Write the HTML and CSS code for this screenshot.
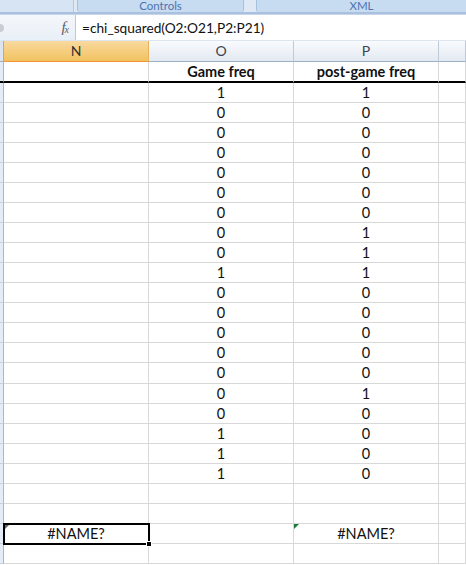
FILE: index.html
```html
<!DOCTYPE html>
<html>
<head>
<meta charset="utf-8">
<link rel="stylesheet" href="styles.css">
</head>
<body>
<div class="ribbon">
  <div class="grp grp-left"></div>
  <div class="grp grp-controls"><span>Controls</span></div>
  <div class="grp grp-xml"><span>XML</span></div>
</div>
<div class="fbar">
  <div class="namebox"><span class="nb-btn"></span><span class="fx">f<sub>x</sub></span></div>
  <div class="formula">=chi_squared(O2:O21,P2:P21)</div>
</div>
<div class="sheet">
  <div class="row colhead">
    <div class="c rh"></div>
    <div class="c ch sel">N</div>
    <div class="c ch">O</div>
    <div class="c ch">P</div>
    <div class="c ch"></div>
  </div>
  <div class="row hdr">
    <div class="c rh"></div>
    <div class="c"></div>
    <div class="c b">Game freq</div>
    <div class="c b">post-game freq</div>
    <div class="c"></div>
  </div>
  <div class="row"><div class="c rh"></div><div class="c"></div><div class="c">1</div><div class="c">1</div><div class="c"></div></div>
  <div class="row"><div class="c rh"></div><div class="c"></div><div class="c">0</div><div class="c">0</div><div class="c"></div></div>
  <div class="row"><div class="c rh"></div><div class="c"></div><div class="c">0</div><div class="c">0</div><div class="c"></div></div>
  <div class="row"><div class="c rh"></div><div class="c"></div><div class="c">0</div><div class="c">0</div><div class="c"></div></div>
  <div class="row"><div class="c rh"></div><div class="c"></div><div class="c">0</div><div class="c">0</div><div class="c"></div></div>
  <div class="row"><div class="c rh"></div><div class="c"></div><div class="c">0</div><div class="c">0</div><div class="c"></div></div>
  <div class="row"><div class="c rh"></div><div class="c"></div><div class="c">0</div><div class="c">0</div><div class="c"></div></div>
  <div class="row"><div class="c rh"></div><div class="c"></div><div class="c">0</div><div class="c">1</div><div class="c"></div></div>
  <div class="row"><div class="c rh"></div><div class="c"></div><div class="c">0</div><div class="c">1</div><div class="c"></div></div>
  <div class="row"><div class="c rh"></div><div class="c"></div><div class="c">1</div><div class="c">1</div><div class="c"></div></div>
  <div class="row"><div class="c rh"></div><div class="c"></div><div class="c">0</div><div class="c">0</div><div class="c"></div></div>
  <div class="row"><div class="c rh"></div><div class="c"></div><div class="c">0</div><div class="c">0</div><div class="c"></div></div>
  <div class="row"><div class="c rh"></div><div class="c"></div><div class="c">0</div><div class="c">0</div><div class="c"></div></div>
  <div class="row"><div class="c rh"></div><div class="c"></div><div class="c">0</div><div class="c">0</div><div class="c"></div></div>
  <div class="row tall"><div class="c rh"></div><div class="c"></div><div class="c">0</div><div class="c">0</div><div class="c"></div></div>
  <div class="row"><div class="c rh"></div><div class="c"></div><div class="c">0</div><div class="c">1</div><div class="c"></div></div>
  <div class="row"><div class="c rh"></div><div class="c"></div><div class="c">0</div><div class="c">0</div><div class="c"></div></div>
  <div class="row"><div class="c rh"></div><div class="c"></div><div class="c">1</div><div class="c">0</div><div class="c"></div></div>
  <div class="row"><div class="c rh"></div><div class="c"></div><div class="c">1</div><div class="c">0</div><div class="c"></div></div>
  <div class="row"><div class="c rh"></div><div class="c"></div><div class="c">1</div><div class="c">0</div><div class="c"></div></div>
  <div class="row"><div class="c rh"></div><div class="c"></div><div class="c"></div><div class="c"></div><div class="c"></div></div>
  <div class="row"><div class="c rh"></div><div class="c"></div><div class="c"></div><div class="c"></div><div class="c"></div></div>
  <div class="row"><div class="c rh"></div><div class="c active">#NAME?<span class="handle"></span></div><div class="c"></div><div class="c err">#NAME?</div><div class="c"></div></div>
  <div class="row"><div class="c rh"></div><div class="c"></div><div class="c"></div><div class="c"></div><div class="c"></div></div>
</div>
</body>
</html>
```

FILE: styles.css
```css
* { box-sizing: border-box; }
html, body { margin: 0; padding: 0; background: #fff; overflow: hidden; }
body { width: 466px; height: 565px; font-family: "Lato", "Open Sans", sans-serif; }

.ribbon {
  height: 14px;
  display: flex;
  background: #dfe9f5;
  border-bottom: 2px solid #a9c1de;
  overflow: hidden;
}
.grp {
  height: 12px;
  display: flex;
  justify-content: center;
  align-items: flex-end;
  font-size: 11.5px;
  line-height: 12px;
  color: #4d74b0;
}
.grp-left { width: 74px; background: #d6e4f3; border-right: 1px solid #b3c9e3; }
.grp-controls { width: 167px; margin-left: 3px; background: #c7dbf1; border-left: 1px solid #a7c0de; border-right: 1px solid #a7c0de; border-radius: 0 0 3px 3px; }
.grp-xml { flex: 1; margin-left: 12px; background: #c7dbf1; border-left: 1px solid #a7c0de; border-radius: 0 0 0 3px; }

.fbar {
  height: 27px;
  display: flex;
  background: #fff;
  border-top: 1px solid #c5d6ea;
  border-bottom: 1px solid #dde6f0;
}
.namebox {
  width: 76px;
  display: flex;
  align-items: center;
  justify-content: space-between;
  background: linear-gradient(#f4f7fb, #e9eff7);
  border-right: 1px solid #b9c9dc;
  padding-right: 7px;
}
.nb-btn {
  width: 4px; height: 8px;
  background: #c9ccd1;
  border-radius: 0 4px 4px 0;
}
.fx {
  font-family: "Liberation Serif", serif;
  font-style: italic;
  font-size: 15px;
  color: #55606e;
  letter-spacing: -1px;
}
.fx sub { font-size: 10px; vertical-align: -1px; }
.formula {
  flex: 1;
  padding-left: 6px;
  font-size: 13.7px;
  line-height: 25px;
  color: #111;
}

.row {
  display: grid;
  grid-template-columns: 4px 145px 145px 145px 1fr;
  height: 20px;
}
.row.tall { height: 21px; }
.c {
  border-right: 1px solid #d8d8d8;
  border-bottom: 1px solid #d8d8d8;
  font-size: 14.5px;
  line-height: 19px;
  text-align: center;
  color: #111;
  position: relative;
}
.c.rh { background: #e4ecf7; border-right: 1px solid #a7b8cc; border-bottom: 1px solid #c5d2e0; }

.colhead { height: 21px; }
.colhead .c {
  background: linear-gradient(#f9fbfd, #e3e9f2);
  border-right: 1px solid #c0cad6;
  border-bottom: 1px solid #9eb0c4;
  color: #3c4450;
  font-size: 14px;
  line-height: 20px;
}
.colhead .c.rh { background: #dbe4ef; border-right: 1px solid #9eb0c4; }
.colhead .c.sel {
  background: linear-gradient(#f9d99f, #f1c25f);
  border-right: 1px solid #e9b35b;
  border-bottom: 1px solid #f29536;
  color: #333;
}

.hdr { height: 21px; }
.hdr .c { border-bottom: 2px solid #000; line-height: 19px; }
.hdr .c.rh { border-bottom: 2px solid #000; }
.b { font-weight: bold; }

.active {
  outline: 2px solid #000;
  outline-offset: -1px;
  z-index: 2;
}
.active::before {
  content: "";
  position: absolute;
  left: 1px; top: 1px;
  border-top: 4px solid #666;
  border-right: 4px solid transparent;
}
.handle {
  position: absolute;
  right: -4px; bottom: -4px;
  width: 6px; height: 6px;
  background: #000;
  border: 1px solid #fff;
}
.err::before {
  content: "";
  position: absolute;
  left: 0; top: 0;
  border-top: 5px solid #1e7a3a;
  border-right: 5px solid transparent;
}
```
